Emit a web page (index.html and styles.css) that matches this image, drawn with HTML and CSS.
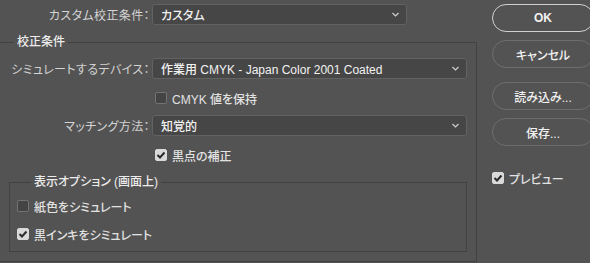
FILE: index.html
```html
<!DOCTYPE html>
<html lang="ja">
<head>
    <meta charset="UTF-8">
    <title>カスタム校正条件</title>
    <link rel="stylesheet" href="styles.css">
</head>
<body>
    <div class="dialog">
        <div class="main">
            <div class="row top-row">
                <label class="label">カスタム校正条件：</label>
                <div class="select select-short">
                    <span>カスタム</span>
                    <svg class="chevron" width="7" height="5" viewBox="0 0 7 5"><path d="M0.5 1 L3.5 4 L6.5 1" fill="none" stroke="#cfcfcf" stroke-width="1.2"/></svg>
                </div>
            </div>

            <fieldset class="group proof">
                <legend>校正条件</legend>

                <div class="row">
                    <label class="label">シミュレートするデバイス：</label>
                    <div class="select">
                        <span>作業用 CMYK - Japan Color 2001 Coated</span>
                        <svg class="chevron" width="7" height="5" viewBox="0 0 7 5"><path d="M0.5 1 L3.5 4 L6.5 1" fill="none" stroke="#cfcfcf" stroke-width="1.2"/></svg>
                    </div>
                </div>

                <div class="check-row indent">
                    <span class="box"></span>
                    <span>CMYK 値を保持</span>
                </div>

                <div class="row row-match">
                    <label class="label">マッチング方法：</label>
                    <div class="select">
                        <span>知覚的</span>
                        <svg class="chevron" width="7" height="5" viewBox="0 0 7 5"><path d="M0.5 1 L3.5 4 L6.5 1" fill="none" stroke="#cfcfcf" stroke-width="1.2"/></svg>
                    </div>
                </div>

                <div class="check-row indent row-black">
                    <span class="box checked"><svg width="10" height="8" viewBox="0 0 10 8"><path d="M1.5 4 L4 6.5 L8.5 1.5" fill="none" stroke="#2b2b2b" stroke-width="2"/></svg></span>
                    <span>黒点の補正</span>
                </div>

                <fieldset class="group display">
                    <legend>表示オプション (画面上)</legend>
                    <div class="check-row">
                        <span class="box"></span>
                        <span>紙色をシミュレート</span>
                    </div>
                    <div class="check-row row-ink">
                        <span class="box checked"><svg width="10" height="8" viewBox="0 0 10 8"><path d="M1.5 4 L4 6.5 L8.5 1.5" fill="none" stroke="#2b2b2b" stroke-width="2"/></svg></span>
                        <span>黒インキをシミュレート</span>
                    </div>
                </fieldset>
            </fieldset>
        </div>

        <div class="side">
            <button class="btn default">OK</button>
            <button class="btn">キャンセル</button>
            <button class="btn btn-load">読み込み...</button>
            <button class="btn">保存...</button>
            <div class="check-row preview">
                <span class="box checked"><svg width="10" height="8" viewBox="0 0 10 8"><path d="M1.5 4 L4 6.5 L8.5 1.5" fill="none" stroke="#2b2b2b" stroke-width="2"/></svg></span>
                <span>プレビュー</span>
            </div>
        </div>
    </div>
</body>
</html>
```

FILE: styles.css
```css
body {
    margin: 0;
    background: #535353;
    color: #d8d8d8;
    font-family: 'Liberation Sans', 'Noto Sans CJK JP', sans-serif;
    font-size: 12px;
    font-feature-settings: "palt";
    overflow: hidden;
}

.dialog {
    display: flex;
    height: 263px;
}

.main {
    width: 477px;
}

.row {
    display: flex;
    align-items: center;
    height: 21px;
}

.top-row {
    margin-top: 4px;
}

.label {
    width: 150px;
    text-align: right;
    white-space: nowrap;
    margin-right: 2px;
    color: #d4d4d4;
    letter-spacing: 0.4px;
}

.select {
    box-sizing: border-box;
    width: 315px;
    height: 21px;
    display: flex;
    align-items: center;
    justify-content: space-between;
    padding: 0 7px 0 8px;
    background: #464646;
    border: 1px solid #626262;
    border-radius: 3px;
    color: #f2f2f2;
    font-weight: 500;
}

.select-short {
    width: 255px;
}

.chevron {
    display: block;
}

.group {
    margin: 0;
    border: 1px solid #424242;
    min-width: 0;
}

.group legend {
    padding: 0 3px;
    margin-left: 14px;
    line-height: 14px;
    color: #ececec;
    font-weight: 500;
}

.proof {
    box-sizing: border-box;
    width: 477px;
    margin-top: 10px;
    border-left: none;
    padding: 9px 9px 9px 0;
}

.display {
    box-sizing: border-box;
    width: 458px;
    margin: 9px 0 0 9px;
    padding: 6px 7px 6px 7px;
}

.check-row {
    display: flex;
    align-items: center;
    height: 22px;
    color: #e2e2e2;
    font-weight: 500;
}

.indent {
    padding-left: 155px;
    margin-top: 8px;
}

.row-match {
    margin-top: 6px;
}

.row-black {
    margin-top: 8px;
}

.row-ink {
    margin-top: 6px;
}

.box {
    box-sizing: border-box;
    width: 12px;
    height: 12px;
    margin-right: 5px;
    border: 1px solid #737373;
    border-radius: 2px;
    background: #444444;
    display: flex;
    align-items: center;
    justify-content: center;
}

.box.checked {
    background: #d9d9d9;
    border-color: #d9d9d9;
}

.side {
    display: flex;
    flex-direction: column;
    padding: 4px 0 0 15px;
}

.btn {
    box-sizing: border-box;
    width: 102px;
    height: 28px;
    margin-bottom: 8px;
    border: 1px solid #6e6e6e;
    border-radius: 14px;
    background: transparent;
    color: #f2f2f2;
    font-family: inherit;
    font-size: 12px;
    font-weight: 500;
    font-feature-settings: "palt";
}

.btn.default {
    border: 1.5px solid #d0d0d0;
    font-weight: bold;
}

.btn-load {
    margin-top: 6px;
}

.preview {
    margin-top: 13px;
}
```
